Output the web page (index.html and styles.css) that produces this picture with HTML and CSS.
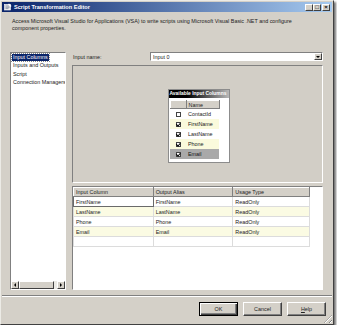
FILE: index.html
```html
<!DOCTYPE html>
<html lang="en">
<head>
    <meta charset="UTF-8">
    <title>Script Transformation Editor</title>
    <link rel="stylesheet" href="styles.css">
</head>
<body>
    <div class="window">
        <!-- Barra de titulo -->
        <div class="titlebar">
            <svg class="app-icon" width="8" height="8" viewBox="0 0 8 8">
                <rect x="0.5" y="1.5" width="6" height="5.5" fill="#e8e8e8" stroke="#fff" stroke-width="0.6"/>
                <path d="M1.5 3h4M1.5 4.3h4M1.5 5.6h3" stroke="#5a6a8a" stroke-width="0.6"/>
                <path d="M5 0.5l2.5 2.5-1 1-2.5-2.5z" fill="#fff"/>
            </svg>
            <span class="title">Script Transformation Editor</span>
            <div class="caption-buttons">
                <span class="cap cap-min">_</span>
                <span class="cap cap-max">&#9633;</span>
                <span class="cap cap-close">&times;</span>
            </div>
        </div>

        <p class="desc">Access Microsoft Visual Studio for Applications (VSA) to write scripts using Microsoft Visual Basic .NET and configure<br>component properties.</p>

        <div class="content">
            <!-- Lista de paginas -->
            <div class="nav-list">
                <div class="nav-items">
                    <div class="nav-item"><span class="selected">Input Columns</span></div>
                    <div class="nav-item"><span>Inputs and Outputs</span></div>
                    <div class="nav-item"><span>Script</span></div>
                    <div class="nav-item"><span>Connection Managers</span></div>
                </div>
                <div class="hscroll">
                    <span class="sb-btn"><span class="arrow-left"></span></span>
                    <span class="sb-thumb"></span>
                    <span class="sb-track"></span>
                    <span class="sb-btn"><span class="arrow-right"></span></span>
                </div>
            </div>

            <div class="page">
                <div class="input-row">
                    <span class="label">Input name:</span>
                    <div class="combo">
                        <span class="combo-text">Input 0</span>
                        <span class="combo-btn"><span class="arrow-down"></span></span>
                    </div>
                </div>

                <!-- Superficie del disenador -->
                <div class="designer">
                    <div class="tw">
                        <div class="tw-title">Available Input Columns</div>
                        <div class="tw-body">
                            <table class="tw-grid">
                                <thead>
                                    <tr><th class="c-check"></th><th class="c-name">Name</th></tr>
                                </thead>
                                <tbody>
                                    <tr><td class="c-check"><span class="cb"></span></td><td>ContactId</td></tr>
                                    <tr class="alt"><td class="c-check"><span class="cb checked"></span></td><td>FirstName</td></tr>
                                    <tr><td class="c-check"><span class="cb checked"></span></td><td>LastName</td></tr>
                                    <tr class="alt"><td class="c-check"><span class="cb checked"></span></td><td>Phone</td></tr>
                                    <tr class="sel"><td class="c-check"><span class="cb checked"></span></td><td>Email</td></tr>
                                </tbody>
                            </table>
                        </div>
                    </div>
                </div>

                <!-- Grilla de columnas -->
                <div class="grid-wrap">
                    <table class="grid">
                        <thead>
                            <tr>
                                <th class="col1">Input Column</th>
                                <th class="col2">Output Alias</th>
                                <th class="col3">Usage Type</th>
                            </tr>
                        </thead>
                        <tbody>
                            <tr><td class="focus">FirstName</td><td>FirstName</td><td>ReadOnly</td></tr>
                            <tr class="alt"><td>LastName</td><td>LastName</td><td>ReadOnly</td></tr>
                            <tr><td>Phone</td><td>Phone</td><td>ReadOnly</td></tr>
                            <tr class="alt"><td>Email</td><td>Email</td><td>ReadOnly</td></tr>
                            <tr><td></td><td></td><td></td></tr>
                        </tbody>
                    </table>
                </div>
            </div>
        </div>

        <div class="separator"></div>

        <div class="buttons">
            <button class="btn default">OK</button>
            <button class="btn">Cancel</button>
            <button class="btn"><u>H</u>elp</button>
        </div>

        <span class="grip"></span>
    </div>
</body>
</html>
```

FILE: styles.css
```css
* {
    box-sizing: border-box;
}

body {
    margin: 0;
    background: #fff;
    font-family: "Liberation Sans", Arial, sans-serif;
    font-size: 5.4px;
    color: #222;
}

.window {
    position: relative;
    width: 334px;
    height: 325px;
    padding: 1px;
    background: #d4d0c8;
    border: 1px solid;
    border-color: #ecebe6 #404040 #404040 #ecebe6;
    box-shadow: 2px 2px 2px rgba(0, 0, 0, 0.55);
    display: flex;
    flex-direction: column;
}

/* Barra de titulo */
.titlebar {
    height: 10px;
    padding: 0 2px;
    display: flex;
    align-items: center;
    background: linear-gradient(to right, #0a246a, #a6caf0);
    color: #fff;
    font-weight: bold;
    font-size: 5.6px;
}

.app-icon {
    margin-right: 2px;
}

.title {
    flex: 1;
}

.caption-buttons {
    display: flex;
}

.cap {
    width: 8px;
    height: 7px;
    display: flex;
    align-items: center;
    justify-content: center;
    background: #d4d0c8;
    border: 1px solid;
    border-color: #fff #404040 #404040 #fff;
    color: #000;
    font-size: 6px;
    font-weight: bold;
    line-height: 1;
}

.cap-min {
    color: #888;
    align-items: flex-end;
}

.cap-close {
    margin-left: 1px;
}

.desc {
    margin: 6px 0 0 10px;
    line-height: 7px;
}

/* Contenido */
.content {
    display: flex;
    gap: 6px;
    height: 238px;
    margin: 20px 0 0 8px;
}

.nav-list {
    width: 56px;
    display: flex;
    flex-direction: column;
    background: #fff;
    border: 1px solid;
    border-color: #808080 #fff #fff #808080;
}

.nav-items {
    flex: 1;
    padding: 0 1px;
    overflow: hidden;
}

.nav-item {
    height: 8.3px;
    line-height: 8.3px;
    white-space: nowrap;
}

.nav-item span {
    padding: 0 1px;
}

.nav-item .selected {
    display: inline-block;
    line-height: 7px;
    background: #0a246a;
    color: #fff;
    outline: 1px dotted #8a8a8a;
}

.hscroll {
    height: 8px;
    display: flex;
    background: #ebeae5;
}

.sb-btn,
.sb-thumb,
.combo-btn {
    display: flex;
    align-items: center;
    justify-content: center;
    background: #d4d0c8;
    border: 1px solid;
    border-color: #fff #404040 #404040 #fff;
}

.sb-btn {
    width: 8px;
}

.sb-thumb {
    width: 35px;
}

.sb-track {
    flex: 1;
}

.arrow-left,
.arrow-right,
.arrow-down {
    width: 0;
    height: 0;
    border: 2px solid transparent;
}

.arrow-left {
    border-right-color: #000;
    border-left-width: 0;
}

.arrow-right {
    border-left-color: #000;
    border-right-width: 0;
}

.arrow-down {
    border-top-color: #000;
    border-bottom-width: 0;
}

.page {
    width: 251px;
    display: flex;
    flex-direction: column;
}

.input-row {
    height: 9px;
    display: flex;
    align-items: center;
}

.label {
    width: 78px;
    padding-left: 1px;
}

.combo {
    width: 173px;
    height: 9px;
    display: flex;
    align-items: center;
    background: #fff;
    border: 1px solid;
    border-color: #808080 #fff #fff #808080;
}

.combo-text {
    flex: 1;
    padding-left: 2px;
}

.combo-btn {
    width: 8px;
    height: 7px;
}

/* Disenador */
.designer {
    height: 118px;
    margin-top: 4px;
    display: flex;
    align-items: center;
    justify-content: center;
    padding: 4px 0 0 2px;
    background: #d2cec6;
    border: 1px solid;
    border-color: #808080 #fff #fff #808080;
}

.tw {
    width: 62px;
    height: 74px;
    background: #fff;
    border: 1px solid #8c8c8c;
}

.tw-title {
    height: 8px;
    line-height: 8px;
    padding-left: 1px;
    white-space: nowrap;
    background: linear-gradient(to right, #000 30%, #b8b8b8);
    color: #fff;
    font-weight: bold;
    font-size: 4.9px;
}

.tw-body {
    padding: 2px 0 0 1px;
}

.tw-grid {
    border-collapse: collapse;
}

.tw-grid th {
    height: 8px;
    padding: 0 0 0 2px;
    text-align: left;
    font-weight: normal;
    background: #d4d0c8;
    border: 1px solid;
    border-color: #fff #808080 #808080 #fff;
}

.tw-grid td {
    height: 10px;
    padding: 0 0 0 2px;
}

.tw-grid .c-check {
    width: 16px;
    text-align: center;
    padding: 0;
}

.tw-grid .c-name {
    width: 33px;
}

.tw-grid .alt td {
    background: #fafadc;
}

.tw-grid .sel td {
    background: #a9a9a9;
    color: #111;
}

.cb {
    display: inline-block;
    width: 5px;
    height: 5px;
    vertical-align: middle;
    background: #fff;
    border: 1px solid #444;
}

.cb.checked::after {
    content: "";
    display: block;
    width: 1.5px;
    height: 2.5px;
    margin: -0.2px 0 0 0.8px;
    border: solid #000;
    border-width: 0 1px 1px 0;
    transform: rotate(40deg);
}

/* Grilla inferior */
.grid-wrap {
    height: 104px;
    margin-top: 3px;
    background: #fff;
    border: 1px solid;
    border-color: #808080 #fff #fff #808080;
}

.grid {
    border-collapse: collapse;
    width: 237px;
}

.grid th {
    height: 9px;
    padding: 0 0 0 2px;
    text-align: left;
    font-weight: normal;
    background: #d4d0c8;
    border: 1px solid;
    border-color: #fff #808080 #808080 #fff;
}

.grid .col1 { width: 80px; }
.grid .col2 { width: 80px; }
.grid .col3 { width: 77px; }

.grid td {
    height: 10px;
    padding: 0 0 0 2px;
    border: 1px solid #dcdcdc;
}

.grid .alt td {
    background: #fbfbe3;
}

.grid td.focus {
    border: 1px solid #6a6a6a;
}

.separator {
    height: 2px;
    margin-top: 5px;
    border-top: 1px solid #808080;
    border-bottom: 1px solid #fff;
}

.buttons {
    display: flex;
    justify-content: flex-end;
    gap: 5px;
    margin-top: 5px;
    padding-right: 6px;
}

.btn {
    width: 39px;
    height: 14px;
    padding: 0;
    font-family: inherit;
    font-size: 5.4px;
    color: #222;
    background: #d4d0c8;
    border: 1px solid;
    border-color: #fff #404040 #404040 #fff;
    box-shadow: inset -1px -1px 0 #808080;
}

.btn.default {
    border-color: #000;
    box-shadow: inset 1px 1px 0 #fff, inset -1px -1px 0 #404040, inset -2px -2px 0 #808080;
}

.btn u {
    text-decoration: underline;
}

.grip {
    position: absolute;
    right: 1px;
    bottom: 1px;
    width: 8px;
    height: 8px;
    background: repeating-linear-gradient(135deg, transparent 0 1.5px, #808080 1.5px 2.5px, #fff 2.5px 3.5px);
    clip-path: polygon(100% 0, 100% 100%, 0 100%);
}
```
